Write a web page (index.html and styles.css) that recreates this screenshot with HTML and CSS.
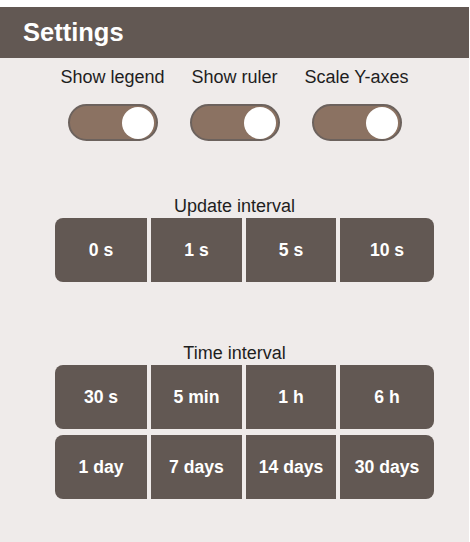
FILE: index.html
```html
<!DOCTYPE html>
<html lang="en">
<head>
  <meta charset="UTF-8" />
  <meta name="viewport" content="width=device-width, initial-scale=1.0"/>
  <title>Settings</title>
  <link rel="stylesheet" href="styles.css">
</head>
<body>

  <div class="panel">
    <!-- Header -->
    <div class="panel__header">Settings</div>

    <!-- Toggles -->
    <div class="toggles">
      <div class="toggle">
        <div class="toggle__label">Show legend</div>
        <div class="switch on"><span class="switch__knob"></span></div>
      </div>
      <div class="toggle">
        <div class="toggle__label">Show ruler</div>
        <div class="switch on"><span class="switch__knob"></span></div>
      </div>
      <div class="toggle">
        <div class="toggle__label">Scale Y-axes</div>
        <div class="switch on"><span class="switch__knob"></span></div>
      </div>
    </div>

    <!-- Update interval -->
    <div class="group group--update">
      <div class="group__title">Update interval</div>
      <div class="btn-row">
        <button class="btn">0 s</button>
        <button class="btn">1 s</button>
        <button class="btn">5 s</button>
        <button class="btn">10 s</button>
      </div>
    </div>

    <!-- Time interval -->
    <div class="group group--time">
      <div class="group__title">Time interval</div>
      <div class="btn-row">
        <button class="btn">30 s</button>
        <button class="btn">5 min</button>
        <button class="btn">1 h</button>
        <button class="btn">6 h</button>
      </div>
      <div class="btn-row">
        <button class="btn">1 day</button>
        <button class="btn">7 days</button>
        <button class="btn">14 days</button>
        <button class="btn">30 days</button>
      </div>
    </div>
  </div>

</body>
</html>
```

FILE: styles.css
```css
* {
  box-sizing: border-box;
  margin: 0;
  padding: 0;
}

body {
  font-family: "Liberation Sans", Arial, sans-serif;
  background-color: #ffffff;
  padding-top: 7px;
  color: #1e1e1e;
}

.panel {
  width: 469px;
  min-height: 535px;
  background-color: #efebea;
}

.panel__header {
  background-color: #625853;
  color: #ffffff;
  font-size: 25.5px;
  font-weight: bold;
  height: 51px;
  line-height: 50px;
  padding-left: 23px;
}

.toggles {
  display: grid;
  grid-template-columns: repeat(3, 122px);
  justify-content: center;
  padding-top: 9px;
}

.toggle {
  display: flex;
  flex-direction: column;
  align-items: center;
}

.toggle__label {
  font-size: 18px;
  line-height: 20px;
  white-space: nowrap;
}

.switch {
  margin-top: 17px;
  width: 90px;
  height: 37px;
  border-radius: 19px;
  border: 2px solid #6c625d;
  background-color: #8b7262;
  display: flex;
  align-items: center;
  padding: 0 2px;
}

.switch.on {
  justify-content: flex-end;
}

.switch__knob {
  width: 32px;
  height: 32px;
  border-radius: 50%;
  background-color: #ffffff;
}

.group {
  display: flex;
  flex-direction: column;
}

.group--update {
  margin-top: 55px;
}

.group--time {
  margin-top: 61px;
}

.group__title {
  font-size: 18px;
  line-height: 20px;
  text-align: center;
  margin-bottom: 2px;
}

.group--time .group__title {
  margin-bottom: 2px;
}

/* Button rows sit a bit right of the centre line */
.btn-row {
  display: grid;
  grid-template-columns: 92px 91px 90px 94px;
  column-gap: 4px;
  margin-left: 55px;
}

.btn-row + .btn-row {
  margin-top: 6px;
}

.btn {
  height: 64px;
  border: none;
  background-color: #625853;
  color: #ffffff;
  font-family: inherit;
  font-size: 17.6px;
  font-weight: bold;
}

.btn:first-child {
  border-radius: 8px 0 0 8px;
}

.btn:last-child {
  border-radius: 0 8px 8px 0;
}
```
